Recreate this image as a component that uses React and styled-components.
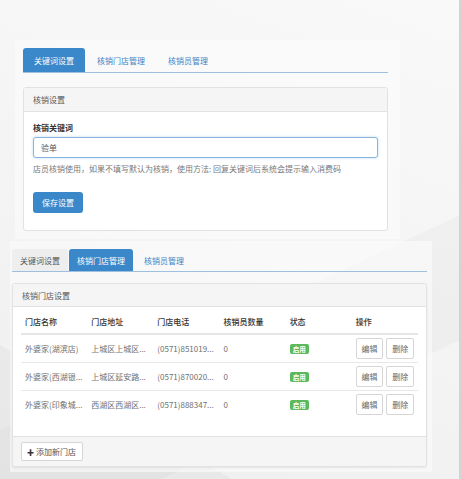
import React from "react";
import styled, { createGlobalStyle } from "styled-components";

const GlobalStyle = createGlobalStyle`
  html, body {
    margin: 0;
    padding: 0;
  }
  body {
    font-family: "Noto Sans CJK SC", "Liberation Sans", sans-serif;
    font-size: 8px;
    color: #555;
  }
  * {
    box-sizing: border-box;
  }
`;

const stores = [
  { name: "外婆家(湖滨店)", addr: "上城区上城区...", phone: "(0571)851019...", count: 0 },
  { name: "外婆家(西湖银...", addr: "上城区延安路...", phone: "(0571)870020...", count: 0 },
  { name: "外婆家(印象城...", addr: "西湖区西湖区...", phone: "(0571)888347...", count: 0 },
];

export default function App() {
  return (
    <Page>
      <GlobalStyle />

      {/* keyword settings shot */}
      <Shot $pad="8px 12px 8px 8px" $width="385px" $ml="15px">
        <Tabs>
          <Tab $active $px="11px">关键词设置</Tab>
          <Tab $px="11px">核销门店管理</Tab>
          <Tab $px="11px">核销员管理</Tab>
        </Tabs>
        <Panel $mt="14px">
          <PanelHeader>核销设置</PanelHeader>
          <FormBody>
            <Label>核销关键词</Label>
            <Input defaultValue="验单" />
            <Help>
              店员核销使用，如果不填写默认为核销，使用方法: 回复关键词后系统会提示输入消费码
            </Help>
            <PrimaryButton>保存设置</PrimaryButton>
          </FormBody>
        </Panel>
      </Shot>

      {/* store management shot */}
      <Shot $pad="8px 5px 5px 2px" $width="422px" $ml="10px" $mt="2px">
        <Tabs $h="23px">
          <Tab $muted $px="8px">关键词设置</Tab>
          <Tab $active $px="8px">核销门店管理</Tab>
          <Tab $px="10px">核销员管理</Tab>
        </Tabs>
        <Panel $mt="11px" $shadow>
          <PanelHeader $h="23px">核销门店设置</PanelHeader>
          <TableBody>
            <Table>
              <thead>
                <tr>
                  <Th>门店名称</Th>
                  <Th>门店地址</Th>
                  <Th>门店电话</Th>
                  <Th>核销员数量</Th>
                  <Th>状态</Th>
                  <Th>操作</Th>
                </tr>
              </thead>
              <tbody>
                {stores.map((s) => (
                  <tr key={s.name}>
                    <Td>{s.name}</Td>
                    <Td>{s.addr}</Td>
                    <Td>{s.phone}</Td>
                    <Td>{s.count}</Td>
                    <Td>
                      <Badge>启用</Badge>
                    </Td>
                    <Td>
                      <Actions>
                        <SmallButton>编辑</SmallButton>
                        <SmallButton>删除</SmallButton>
                      </Actions>
                    </Td>
                  </tr>
                ))}
              </tbody>
            </Table>
          </TableBody>
          <PanelFooter>
            <DefaultButton>
              <Plus>✚</Plus>添加新门店
            </DefaultButton>
          </PanelFooter>
        </Panel>
      </Shot>
    </Page>
  );
}

const Page = styled("div")`
  width: 461px;
  height: 479px;
  overflow: hidden;
  padding-top: 40px;
  border-right: 2px solid #d4d4d4;
  background:
    linear-gradient(155deg, transparent 0 62%, rgba(0, 0, 0, 0.025) 62% 80%, transparent 80%),
    linear-gradient(30deg, rgba(0, 0, 0, 0.03) 0 18%, transparent 18%),
    linear-gradient(200deg, #f9f9f9 0%, #efefef 100%);
`;

const Shot = styled("div")`
  width: ${({ $width }) => $width};
  margin-left: ${({ $ml }) => $ml};
  margin-top: ${({ $mt }) => $mt || 0};
  padding: ${({ $pad }) => $pad};
  background: rgba(252, 252, 252, 0.6);
`;

const Tabs = styled("div")`
  display: flex;
  height: ${({ $h }) => $h || "25px"};
  border-bottom: 1px solid #9fbfdf;
`;

const Tab = styled("div")`
  display: flex;
  align-items: center;
  padding: 0 ${({ $px }) => $px};
  margin-right: 1px;
  border-radius: 3px 3px 0 0;
  font-size: 8px;
  color: ${({ $active }) => ($active ? "#fff" : "#3d82c4")};
  background: ${({ $active, $muted }) =>
    $active ? "#3a87c9" : $muted ? "#eeeeee" : "transparent"};
  ${({ $muted }) => $muted && "color: #555;"}
`;

const Panel = styled("div")`
  margin-top: ${({ $mt }) => $mt};
  border: 1px solid #e2e2e2;
  border-radius: 3px;
  background: #fff;
  overflow: hidden;
  box-shadow: ${({ $shadow }) => ($shadow ? "0 1px 2px rgba(0,0,0,0.08)" : "none")};
`;

const PanelHeader = styled("div")`
  height: ${({ $h }) => $h || "24px"};
  display: flex;
  align-items: center;
  padding-left: 9px;
  background: #f5f5f5;
  border-bottom: 1px solid #e2e2e2;
  font-size: 8px;
  color: #555;
`;

const FormBody = styled("div")`
  padding: 10px 9px 17px;
  display: flex;
  flex-direction: column;
  align-items: flex-start;
`;

const Label = styled("div")`
  font-size: 8px;
  font-weight: bold;
  color: #333;
  line-height: 12px;
`;

const Input = styled("input")`
  width: 100%;
  height: 21px;
  margin-top: 3px;
  padding: 0 7px;
  border: 1px solid #8ab4dd;
  border-radius: 3px;
  box-shadow: 0 0 3px rgba(102, 175, 233, 0.45);
  font-family: inherit;
  font-size: 8px;
  color: #555;
  outline: none;
`;

const Help = styled("div")`
  margin-top: 5px;
  font-size: 8px;
  line-height: 12px;
  color: #777;
`;

const PrimaryButton = styled("button")`
  margin-top: 17px;
  width: 50px;
  height: 21px;
  border: none;
  border-radius: 3px;
  background: #3a87c9;
  color: #fff;
  font-family: inherit;
  font-size: 8px;
  padding: 0;
`;

const TableBody = styled("div")`
  padding: 7px 8px 18px;
`;

const Table = styled("table")`
  width: 100%;
  border-collapse: collapse;
  table-layout: fixed;
`;

const Th = styled("th")`
  height: 20px;
  padding: 0 4px 4px;
  text-align: left;
  vertical-align: middle;
  font-size: 8px;
  font-weight: 500;
  color: #333;
  border-bottom: 2px solid #e6e6e6;
`;

const Td = styled("td")`
  height: 28px;
  padding: 0 4px;
  font-size: 8px;
  color: #6f6f6f;
  white-space: nowrap;
  overflow: hidden;
  border-bottom: 1px solid #e8e8e8;
  tr:last-child > & {
    border-bottom: none;
  }
`;

const Badge = styled("span")`
  display: inline-block;
  padding: 0 3px;
  height: 10px;
  line-height: 10px;
  border-radius: 2px;
  background: #5cb85c;
  color: #fff;
  font-size: 6.5px;
  font-weight: bold;
`;

const Actions = styled("div")`
  display: flex;
  gap: 3px;
`;

const SmallButton = styled("button")`
  width: 29px;
  height: 21px;
  padding: 0;
  border: 1px solid #d6d6d6;
  border-radius: 2px;
  background: #fff;
  color: #666;
  font-family: inherit;
  font-size: 8px;
`;

const PanelFooter = styled("div")`
  height: 30px;
  padding: 5px 8px;
  background: #f5f5f5;
  border-top: 1px solid #e2e2e2;
`;

const DefaultButton = styled("button")`
  height: 19px;
  padding: 0 6px 0 5px;
  display: flex;
  align-items: center;
  gap: 2px;
  white-space: nowrap;
  border: 1px solid #d6d6d6;
  border-radius: 2px;
  background: #fff;
  color: #555;
  font-family: inherit;
  font-size: 8px;
`;

const Plus = styled("span")`
  font-size: 7px;
  color: #333;
`;
